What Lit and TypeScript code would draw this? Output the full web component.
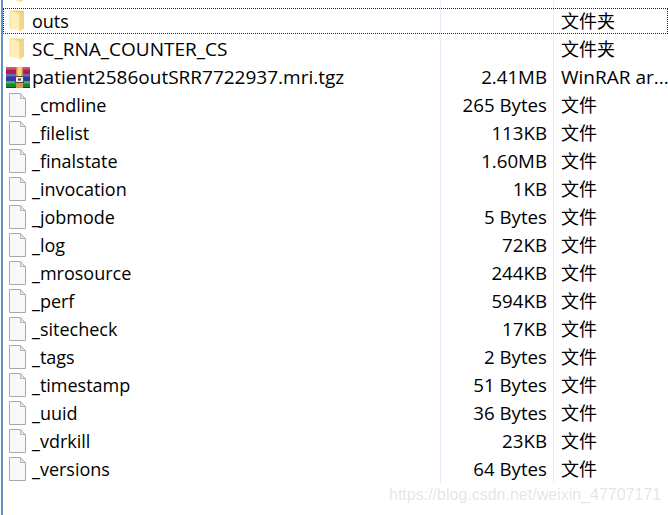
import { LitElement, html, css, svg } from "lit";
import { customElement } from "lit/decorators.js";

type Row = { n: string; s?: string; t: string; k: "folder" | "rar" | "file"; f?: boolean; caps?: boolean };
const rows: Row[] = [
  { n: "outs", t: "文件夹", k: "folder", f: true },
  { n: "SC_RNA_COUNTER_CS", t: "文件夹", k: "folder", caps: true },
  { n: "patient2586outSRR7722937.mri.tgz", s: "2.41MB", t: "WinRAR ar...", k: "rar", caps: true },
  { n: "_cmdline", s: "265 Bytes", t: "文件", k: "file" },
  { n: "_filelist", s: "113KB", t: "文件", k: "file" },
  { n: "_finalstate", s: "1.60MB", t: "文件", k: "file" },
  { n: "_invocation", s: "1KB", t: "文件", k: "file" },
  { n: "_jobmode", s: "5 Bytes", t: "文件", k: "file" },
  { n: "_log", s: "72KB", t: "文件", k: "file" },
  { n: "_mrosource", s: "244KB", t: "文件", k: "file" },
  { n: "_perf", s: "594KB", t: "文件", k: "file" },
  { n: "_sitecheck", s: "17KB", t: "文件", k: "file" },
  { n: "_tags", s: "2 Bytes", t: "文件", k: "file" },
  { n: "_timestamp", s: "51 Bytes", t: "文件", k: "file" },
  { n: "_uuid", s: "36 Bytes", t: "文件", k: "file" },
  { n: "_vdrkill", s: "23KB", t: "文件", k: "file" },
  { n: "_versions", s: "64 Bytes", t: "文件", k: "file" },
];

const folder = svg`<svg class="ic" width="16" height="22" viewBox="0 0 16 22">
  <path d="M1 0.500H14.500a.5.5 0 0 1 .5.500V18.500H1z" fill="#f0d27e"/>
  <path d="M1 0.500L9.500 2.500c.6.2 1 .7 1 1.300V18.500L1 18z" fill="#f8df94"/>
  <path d="M1 0.500L10.500 4.500V21.500L1 17.500z" fill="#feeeb8"/>
  <path d="M10.500 4.500V21.500L15 18.500V4z" fill="#f3d587"/>
  <path d="M1 .5V17.500" stroke="#f4dc98" stroke-width="1"/>
</svg>`;

const rar = svg`<svg class="ic" width="24" height="21" viewBox="0 0 24 21">
  <rect x="0" y="0" width="24" height="7" fill="#b01f49"/>
  <rect x="0" y="7" width="24" height="7" fill="#35389a"/>
  <rect x="0" y="14" width="24" height="7" fill="#17843a"/>
  <rect x="0" y="0" width="24" height="2.500" fill="#e0648a" opacity=".75"/>
  <rect x="0" y="7" width="24" height="2.500" fill="#7478dc" opacity=".75"/>
  <rect x="0" y="14" width="24" height="2.500" fill="#54c06c" opacity=".75"/>
  <rect x="0" y="20" width="24" height="1" fill="#0c4a20"/>
  <rect x="10" y="0" width="7" height="21" fill="#d79a42"/>
  <rect x="11.500" y="0" width="4" height="9" fill="#f6d48a"/>
  <rect x="9.500" y="9.500" width="8" height="6" fill="#e8e8e8" stroke="#5a4a30"/>
  <rect x="12" y="11.500" width="3" height="2" fill="#4a4a4a"/>
</svg>`;

const file = svg`<svg class="ic" width="17" height="24" viewBox="0 0 17 24">
  <path d="M.5.500H11.500L16.500 5.500V23.500H.5z" fill="#f8f8f8" stroke="#a8a8a8"/>
  <path d="M11.500.500V5.500H16.500z" fill="#e2e2e2" stroke="#b8b8b8"/>
</svg>`;

@customElement("app-root")
export class AppRoot extends LitElement {
  static styles = css`
    :host {
      display: block;
      position: relative;
      width: 668px;
      height: 515px;
      overflow: hidden;
      background: #fff;
      font-family: "Open Sans", "Noto Sans", "Noto Sans CJK SC", sans-serif;
      font-size: 18px;
      color: #000;
    }
    .list {
      margin-left: 1px;
      border-left: 2px solid #5f93c2;
      height: 515px;
      box-sizing: border-box;
    }
    .stub {
      height: 7px;
      overflow: hidden;
      display: grid;
      grid-template-columns: 438px 113px 130px;
    }
    .stub .ic {
      margin: -19px 0 0 6px;
    }
    .row {
      display: grid;
      grid-template-columns: 438px 113px 130px;
      height: 28px;
      align-items: stretch;
      box-sizing: border-box;
      white-space: nowrap;
      line-height: 28px;
    }
    .row.focus {
      outline: 1px dotted #222;
      outline-offset: -1px;
      height: 26px;
      line-height: 26px;
      margin: 1px 0;
    }
    .cell {
      border-right: 1px solid #e4eefa;
      min-width: 0;
      height: 100%;
    }
    .stub .cell {
      height: 7px;
    }
    .name {
      display: flex;
      align-items: center;
    }
    .name.caps,
    .type.wide {
      font-size: 19px;
    }
    .size {
      font-size: 18.7px;
      text-align: right;
      padding-right: 6px;
      box-sizing: border-box;
    }
    .iwrap {
      width: 29px;
      flex: none;
      display: flex;
      align-items: center;
      padding-left: 6px;
      box-sizing: border-box;
    }
    .rar .iwrap {
      padding-left: 3px;
    }
    .type {
      padding-left: 7px;
      border-right: none;
    }
    .ic {
      display: block;
      flex: none;
    }
    .wm {
      position: absolute;
      left: 389px;
      top: 486px;
      font-family: "Liberation Sans", sans-serif;
      font-size: 16px;
      color: rgba(120, 120, 120, 0.2);
    }
  `;

  render() {
    return html`<div class="list">
        <div class="stub">
          <div class="cell">${folder}</div>
          <div class="cell"></div>
          <div class="cell type"></div>
        </div>
        ${rows.map(
          (r) => html`<div class="row ${r.k} ${r.f ? "focus" : ""}">
            <div class="cell name ${r.caps ? "caps" : ""}">
              <span class="iwrap">${r.k === "folder" ? folder : r.k === "rar" ? rar : file}</span>
              <span>${r.n}</span>
            </div>
            <div class="cell size">${r.s ?? ""}</div>
            <div class="cell type ${r.k === "rar" ? "wide" : ""}">${r.t}</div>
          </div>`
        )}
      </div>
      <div class="wm">https://blog.csdn.net/weixin_47707171</div>`;
  }
}
